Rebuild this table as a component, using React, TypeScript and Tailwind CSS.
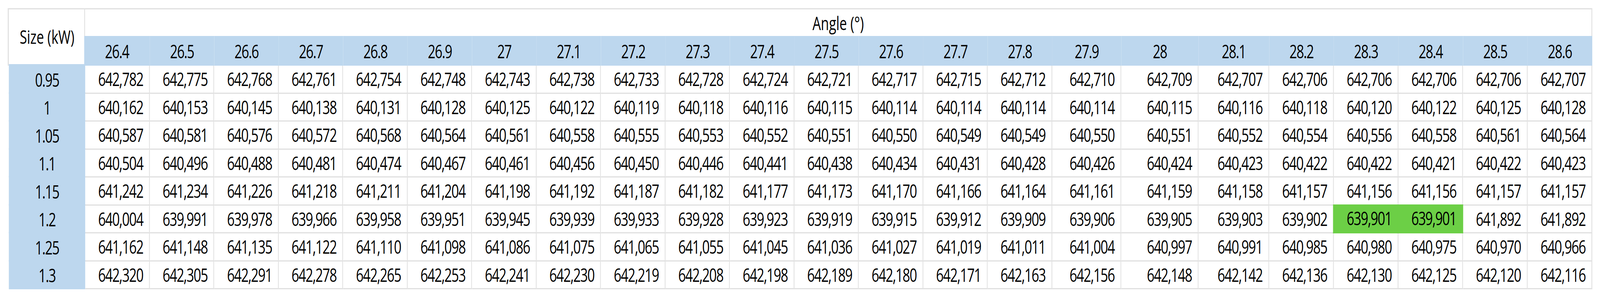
import React from "react";

const angles = ["26.4","26.5","26.6","26.7","26.8","26.9","27","27.1","27.2","27.3","27.4","27.5","27.6","27.7","27.8","27.9","28","28.1","28.2","28.3","28.4","28.5","28.6"];

const rows: { size: string; vals: string[] }[] = [
  { size: "0.95", vals: "642,782 642,775 642,768 642,761 642,754 642,748 642,743 642,738 642,733 642,728 642,724 642,721 642,717 642,715 642,712 642,710 642,709 642,707 642,706 642,706 642,706 642,706 642,707".split(" ") },
  { size: "1", vals: "640,162 640,153 640,145 640,138 640,131 640,128 640,125 640,122 640,119 640,118 640,116 640,115 640,114 640,114 640,114 640,114 640,115 640,116 640,118 640,120 640,122 640,125 640,128".split(" ") },
  { size: "1.05", vals: "640,587 640,581 640,576 640,572 640,568 640,564 640,561 640,558 640,555 640,553 640,552 640,551 640,550 640,549 640,549 640,550 640,551 640,552 640,554 640,556 640,558 640,561 640,564".split(" ") },
  { size: "1.1", vals: "640,504 640,496 640,488 640,481 640,474 640,467 640,461 640,456 640,450 640,446 640,441 640,438 640,434 640,431 640,428 640,426 640,424 640,423 640,422 640,422 640,421 640,422 640,423".split(" ") },
  { size: "1.15", vals: "641,242 641,234 641,226 641,218 641,211 641,204 641,198 641,192 641,187 641,182 641,177 641,173 641,170 641,166 641,164 641,161 641,159 641,158 641,157 641,156 641,156 641,157 641,157".split(" ") },
  { size: "1.2", vals: "640,004 639,991 639,978 639,966 639,958 639,951 639,945 639,939 639,933 639,928 639,923 639,919 639,915 639,912 639,909 639,906 639,905 639,903 639,902 639,901 639,901 641,892 641,892".split(" ") },
  { size: "1.25", vals: "641,162 641,148 641,135 641,122 641,110 641,098 641,086 641,075 641,065 641,055 641,045 641,036 641,027 641,019 641,011 641,004 640,997 640,991 640,985 640,980 640,975 640,970 640,966".split(" ") },
  { size: "1.3", vals: "642,320 642,305 642,291 642,278 642,265 642,253 642,241 642,230 642,219 642,208 642,198 642,189 642,180 642,171 642,163 642,156 642,148 642,142 642,136 642,130 642,125 642,120 642,116".split(" ") },
];

export default function App() {
  return (
    <div className="w-full h-[770px] overflow-hidden bg-white">
      <div className="w-[5796px] h-[770px] origin-top-left scale-x-[0.706694] bg-white pt-[21px] pl-[28px] text-black font-['Open_Sans',sans-serif] text-[48px] leading-none">
        <div className="grid grid-cols-[281px_repeat(15,233.5px)_250px_280px_256px_repeat(5,234px)] grid-rows-[71px_76px_repeat(8,71.5px)]">
          {/* Size header */}
          <div className="row-span-2 col-start-1 row-start-1 bg-white border-t-[3px] border-l-[4px] border-[#e0e0e0] flex items-center justify-center pb-[4px]">
            <span>Size (kW)</span>
          </div>
          {/* Angle header */}
          <div className="col-start-2 col-span-23 row-start-1 -ml-[4px] bg-white border-t-[3px] border-l-[3px] border-r-[3px] border-[#e0e0e0] flex items-center justify-center pt-[2px]">
            <span>Angle (°)</span>
          </div>
          {/* angle values */}
          {angles.map((a, i) => (
            <div
              key={a}
              className={`row-start-2 bg-[#bdd7ee] flex items-center justify-center tracking-[-2px] pt-[2px] ${i === 0 ? "-ml-[4px]" : ""}`}
            >
              {a}
            </div>
          ))}
          {/* data rows */}
          {rows.map((r) => (
            <React.Fragment key={r.size}>
              <div className="col-start-1 ml-[4px] -mt-[4px] bg-[#bdd7ee] flex items-center justify-center tracking-[-2px] pt-[4px]">
                {r.size}
              </div>
              {r.vals.map((v, j) => {
                const green = r.size === "1.2" && (j === 19 || j === 20);
                return (
                  <div
                    key={j}
                    className={
                      green
                        ? "bg-[#6ccf46] -mt-[3px] -ml-[3px] pl-[3px] border-r-[3px] border-b-[3px] border-[#6ccf46] flex items-center justify-end pr-[21px] tracking-[-2px] z-10"
                        : "bg-white border-r-[3px] border-b-[3px] border-[#e0e0e0] flex items-center justify-end pr-[21px] tracking-[-2px]"
                    }
                  >
                    {v}
                  </div>
                );
              })}
            </React.Fragment>
          ))}
        </div>
      </div>
    </div>
  );
}
